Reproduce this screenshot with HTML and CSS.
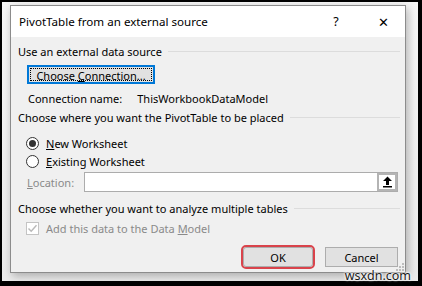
FILE: index.html
```html
<!DOCTYPE html>
<html lang="en">

<head>
  <meta charset="UTF-8">
  <title>PivotTable from an external source</title>
  <link rel="stylesheet" href="styles.css">
</head>

<body>
  <div class="backdrop">
    <div class="dialog">
      <div class="title-bar">
        <span class="title">PivotTable from an external source</span>
        <span class="help">?</span>
        <span class="close">&#x2715;</span>
      </div>

      <div class="dialog-body">
        <div class="group-head"><span>Use an external data source</span><i></i></div>
        <div class="row indent conn-row">
          <button class="btn btn-focus"><span class="focus-ring">Choose <u>C</u>onnection...</span></button>
        </div>
        <div class="row indent conn-name">
          <span>Connection name:</span>
          <span class="conn-value">ThisWorkbookDataModel</span>
        </div>

        <div class="group-head head-2"><span>Choose where you want the PivotTable to be placed</span><i></i></div>
        <div class="row option first-option">
          <span class="radio checked"></span>
          <span><u>N</u>ew Worksheet</span>
        </div>
        <div class="row option">
          <span class="radio"></span>
          <span><u>E</u>xisting Worksheet</span>
        </div>
        <div class="row location">
          <span class="muted"><u>L</u>ocation:</span>
          <div class="location-input">
            <span class="picker">
              <svg width="11" height="12" viewBox="0 0 11 12">
                <path d="M5.5 0.5 L10 5 L7 5 L7 9 L4 9 L4 5 L1 5 Z" fill="#000"/>
                <rect x="1" y="10" width="9" height="1.5" fill="#000"/>
              </svg>
            </span>
          </div>
        </div>

        <div class="group-head head-3"><span>Choose whether you want to analyze multiple tables</span><i></i></div>
        <div class="row option check-row">
          <span class="checkbox">
            <svg width="11" height="11" viewBox="0 0 11 11">
              <path d="M1.5 5.5 L4.2 8.3 L9.5 2.2" fill="none" stroke="#b9b9b9" stroke-width="1.4"/>
            </svg>
          </span>
          <span class="muted">Add this data to the Data <u>M</u>odel</span>
        </div>

        <div class="actions">
          <button class="btn btn-ok">OK</button>
          <button class="btn">Cancel</button>
        </div>
      </div>

      <svg class="grip" width="9" height="9" viewBox="0 0 9 9">
        <rect x="7" y="1" width="2" height="2" fill="#bdbdbd"/>
        <rect x="4" y="4" width="2" height="2" fill="#bdbdbd"/>
        <rect x="7" y="4" width="2" height="2" fill="#bdbdbd"/>
        <rect x="1" y="7" width="2" height="2" fill="#bdbdbd"/>
        <rect x="4" y="7" width="2" height="2" fill="#bdbdbd"/>
        <rect x="7" y="7" width="2" height="2" fill="#bdbdbd"/>
      </svg>
    </div>
  </div>
  <span class="watermark">wsxdn.com</span>
</body>

</html>
```

FILE: styles.css
```css
* {
  box-sizing: border-box;
  margin: 0;
  padding: 0;
}

body {
  width: 422px;
  height: 286px;
  overflow: hidden;
  background: #000;
  padding: 2px 4px 5px 2px;
  font-family: 'Noto Sans', 'Open Sans', sans-serif;
  font-size: 11px;
  color: #000;
  position: relative;
}

.backdrop {
  width: 100%;
  height: 100%;
  background: linear-gradient(#f7f7f7, #ececec);
  padding: 3px 10px 6px 8px;
}

.dialog {
  position: relative;
  width: 396px;
  height: 268px;
  border: 1px solid #8c8c8c;
  background: #f0f0f0;
  box-shadow: 2px 3px 9px rgba(0, 0, 0, 0.28);
  display: flex;
  flex-direction: column;
}

.title-bar {
  height: 31px;
  background: #fff;
  display: flex;
  align-items: center;
  padding-left: 8px;
}

.title {
  flex: 1;
  font-size: 11.6px;
}

.help {
  width: 14px;
  text-align: center;
  margin-right: 33px;
  font-size: 12.5px;
}

.close {
  width: 14px;
  text-align: center;
  margin-right: 15px;
  font-size: 13px;
}

.dialog-body {
  flex: 1;
  padding: 6px 5px 0 7px;
  display: flex;
  flex-direction: column;
}

.row {
  display: flex;
  align-items: center;
  height: 16px;
}

.indent {
  padding-left: 9px;
}

.group-head {
  display: flex;
  align-items: center;
  height: 16px;
}

.group-head i {
  flex: 1;
  height: 1px;
  background: #dcdcdc;
  margin-left: 6px;
  margin-top: 1px;
}

.head-2 {
  margin-top: 3px;
}

.head-3 {
  margin-top: 8px;
}

.btn {
  font-family: inherit;
  font-size: 11px;
  color: #000;
  background: #e1e1e1;
  border: 1px solid #adadad;
  height: 20px;
  width: 73px;
  padding: 0;
  text-align: center;
}

.conn-row {
  margin-top: 6px;
  height: 19px;
}

.btn-focus {
  width: 128px;
  height: 19px;
  border: 2px solid #0078d7;
  padding: 1px;
}

.focus-ring {
  display: block;
  height: 100%;
  line-height: 13px;
  border: 1px dotted #000;
  white-space: nowrap;
}

.conn-name {
  margin-top: 6px;
  padding-left: 10px;
}

.conn-value {
  margin-left: 15px;
}

.option {
  padding-left: 8px;
  margin-top: 2px;
}

.first-option {
  margin-top: 10px;
}

.radio {
  width: 13px;
  height: 13px;
  border: 1px solid #333;
  border-radius: 50%;
  background: #fff;
  margin-right: 7px;
  display: flex;
  align-items: center;
  justify-content: center;
}

.radio.checked::after {
  content: '';
  width: 7px;
  height: 7px;
  border-radius: 50%;
  background: #333;
}

.location {
  height: 20px;
  margin-top: 3px;
  padding-left: 9px;
}

.muted {
  color: #8a8a8a;
}

.location .muted {
  width: 57px;
}

.location-input {
  width: 314px;
  height: 20px;
  border: 1px solid #acacac;
  background: #fff;
  display: flex;
  justify-content: flex-end;
}

.picker {
  width: 20px;
  height: 18px;
  border: 2px solid #b4b4b4;
  background: #fff;
  display: flex;
  align-items: center;
  justify-content: center;
}

.check-row {
  margin-top: 4px;
}

.checkbox {
  width: 13px;
  height: 13px;
  border: 1px solid #c4c4c4;
  background: #fff;
  margin-right: 7px;
  display: flex;
  align-items: center;
  justify-content: center;
}

.actions {
  display: flex;
  justify-content: flex-end;
  gap: 12px;
  margin-top: 11px;
  padding-right: 2px;
}

.btn-ok {
  width: 70px;
  outline: 2px solid #d9434b;
  border-radius: 3px;
}

.grip {
  position: absolute;
  right: 1px;
  bottom: 1px;
}

.watermark {
  position: absolute;
  right: 11px;
  bottom: 2px;
  font-size: 12.5px;
  color: #1a1a1a;
  text-shadow: 0 0 2px #fff, 0 0 2px #fff, 0 0 3px #fff;
}
```
